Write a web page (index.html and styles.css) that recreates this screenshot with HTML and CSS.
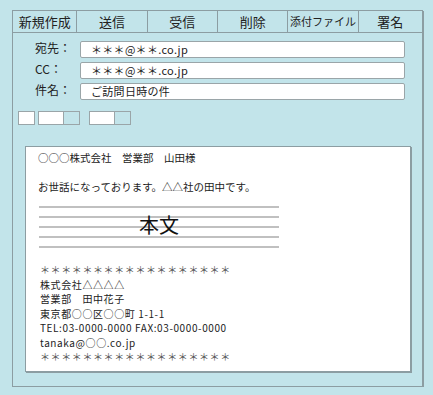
FILE: index.html
```html
<!DOCTYPE html>
<html>
<head>
    <title>メール作成</title>
    <link rel="stylesheet" href="styles.css">
</head>
<body>
    <div class="mail">
        <div class="toolbar">
            <div class="tab tab-edge">新規作成</div>
            <div class="tab">送信</div>
            <div class="tab">受信</div>
            <div class="tab">削除</div>
            <div class="tab tab-small">添付ファイル</div>
            <div class="tab tab-edge">署名</div>
        </div>

        <div class="fields">
            <div class="field">
                <span class="label">宛先：</span>
                <div class="input">＊＊＊@＊＊.co.jp</div>
            </div>
            <div class="field">
                <span class="label">CC：</span>
                <div class="input">＊＊＊@＊＊.co.jp</div>
            </div>
            <div class="field">
                <span class="label">件名：</span>
                <div class="input">ご訪問日時の件</div>
            </div>
        </div>

        <div class="tools">
            <div class="btn btn-single"></div>
            <div class="btn btn-pair"><span class="btn-main"></span><span class="btn-drop"></span></div>
            <div class="btn btn-pair btn-gap"><span class="btn-main"></span><span class="btn-drop"></span></div>
        </div>

        <div class="body">
            <p class="line">○○○株式会社　営業部　山田様</p>
            <p class="line greeting">お世話になっております。△△社の田中です。</p>
            <div class="honbun">
                <div class="rule"></div>
                <div class="rule"></div>
                <div class="rule"></div>
                <div class="rule"></div>
                <div class="rule"></div>
                <span class="honbun-label">本文</span>
            </div>
            <div class="signature">
                <p class="stars">＊＊＊＊＊＊＊＊＊＊＊＊＊＊＊＊＊＊</p>
                <p>株式会社△△△△</p>
                <p>営業部　田中花子</p>
                <p>東京都○○区○○町 1-1-1</p>
                <p>TEL:03-0000-0000 FAX:03-0000-0000</p>
                <p>tanaka@○○.co.jp</p>
                <p class="stars">＊＊＊＊＊＊＊＊＊＊＊＊＊＊＊＊＊＊</p>
            </div>
        </div>
    </div>
</body>
</html>
```

FILE: styles.css
```css
body {
    margin: 0;
    background-color: #c2e4ea;
    font-family: "Noto Sans CJK JP", "Noto Sans", sans-serif;
    color: #222;
}

p {
    margin: 0;
}

.mail {
    width: 409px;
    height: 375px;
    margin: 10px 0 0 12px;
    border: 1px solid #8c9da2;
    box-shadow: 1px 1px 0 #8c9da2;
}

.toolbar {
    display: flex;
    height: 21px;
    border-bottom: 1px solid #8c9da2;
}

.tab {
    width: 70px;
    border-right: 1px solid #8c9da2;
    font-size: 13px;
    line-height: 21px;
    text-align: center;
}

.tab-edge {
    width: 64px;
}

.tab:last-child {
    border-right: none;
}

.tab-small {
    font-size: 11px;
}

.fields {
    padding: 8px 0 0 22px;
}

.field {
    display: flex;
    margin-bottom: 4px;
}

.label {
    width: 45px;
    font-size: 12px;
    line-height: 14px;
}

.input {
    width: 313px;
    height: 15px;
    padding-left: 10px;
    background-color: #fff;
    border: 1px solid #9aa5a8;
    border-radius: 2px;
    font-size: 11px;
    line-height: 15px;
    letter-spacing: 0.3px;
    color: #222;
}

.tools {
    display: flex;
    padding: 7px 0 0 5px;
}

.btn {
    display: flex;
    height: 12px;
    margin-right: 3px;
    border: 1px solid #9aa5a8;
}

.btn-single {
    width: 15px;
    background-color: #fff;
}

.btn-main {
    width: 24px;
    background-color: #fff;
    border-right: 1px solid #9aa5a8;
}

.btn-drop {
    width: 15px;
}

.btn-gap {
    margin-left: 6px;
}

.body {
    height: 220px;
    margin: 21px 0 0 12px;
    width: 372px;
    padding: 4px 0 0 12px;
    background-color: #fff;
    border: 1px solid #8c9da2;
    box-shadow: 1px 1px 0 #8c9da2;
    font-size: 10.5px;
}

.line {
    line-height: 14px;
}

.greeting {
    margin-top: 15px;
}

.honbun {
    position: relative;
    width: 240px;
    margin: 12px 0 0 1px;
}

.rule {
    height: 2px;
    margin-bottom: 8px;
    background-color: #c0c0c0;
}

.honbun-label {
    position: absolute;
    top: 7px;
    left: 0;
    width: 240px;
    font-size: 20px;
    line-height: 24px;
    text-align: center;
    color: #111;
}

.signature {
    margin: 15px 0 0 2px;
    font-size: 10px;
    line-height: 14.5px;
    letter-spacing: 0.6px;
}

.stars {
    color: #555;
    letter-spacing: 0.6px;
}
```
